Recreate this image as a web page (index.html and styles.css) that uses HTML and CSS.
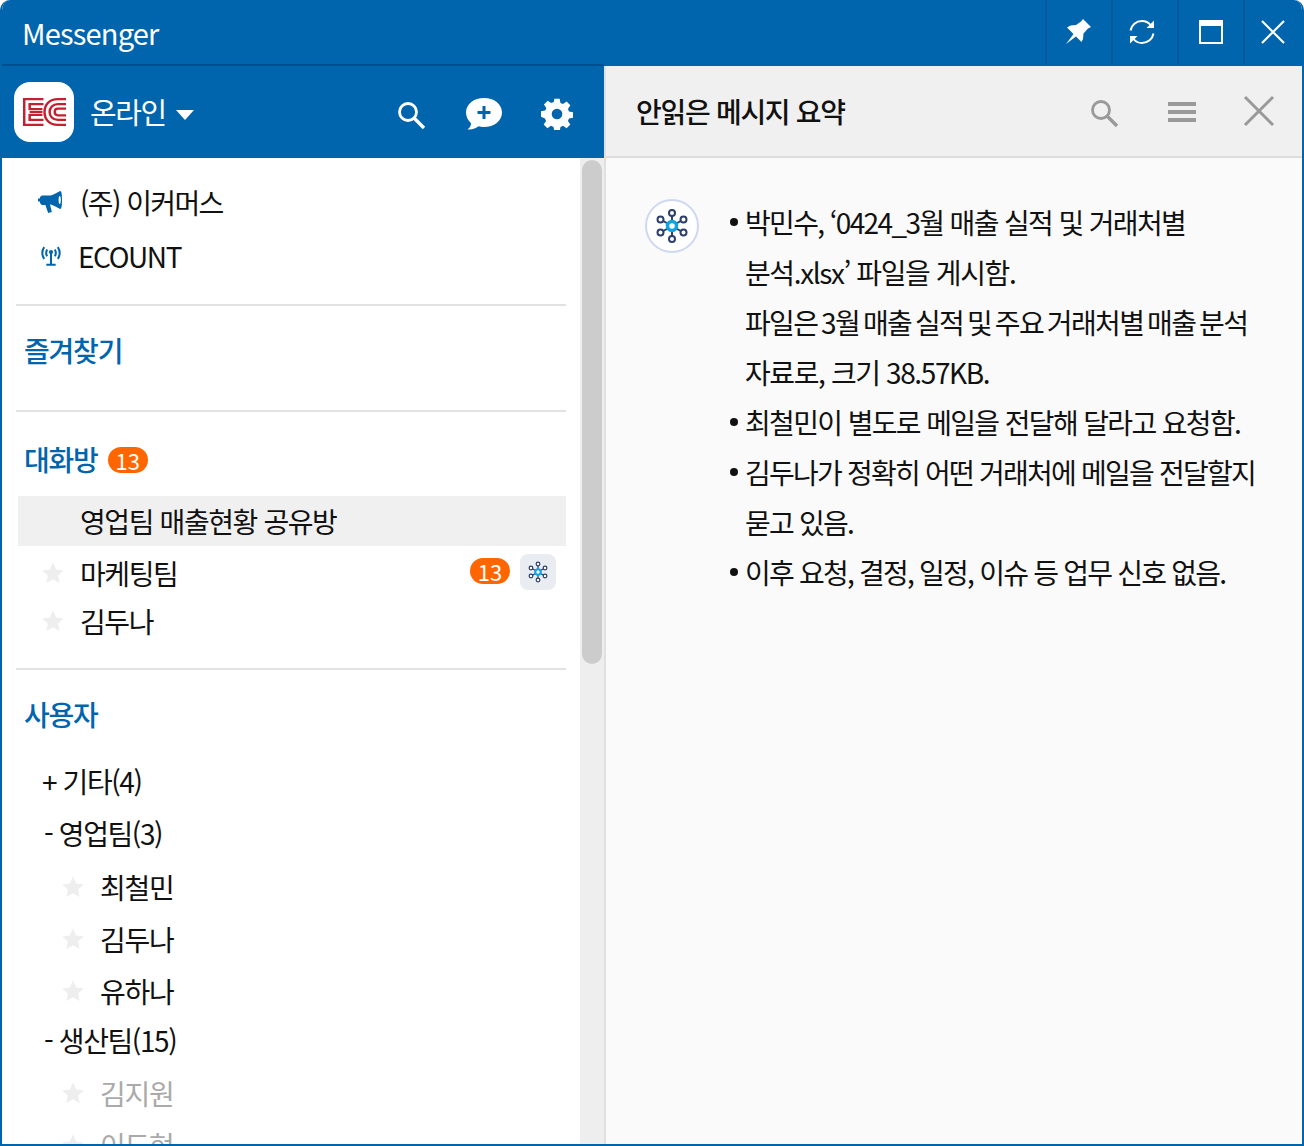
FILE: index.html
```html
<!DOCTYPE html>
<html lang="ko">
<head>
    <meta charset="UTF-8">
    <title>Messenger</title>
    <link rel="stylesheet" href="styles.css">
</head>
<body>
    <svg class="defs" width="0" height="0">
        <symbol id="star" viewBox="0 0 24 24"><path d="M12 1.500l3.200 7.100 7.600.8-5.700 5.100 1.600 7.600L12 18.300l-6.700 3.800 1.600-7.600L1.200 9.400l7.600-.8z"/></symbol>
        <symbol id="nodes" viewBox="0 0 36 36">
            <g stroke="#2b3f6b" fill="none" stroke-width="2">
                <path d="M18 18V6M18 18V30M18 18L7.500 12M18 18L28.500 12M18 18L7.500 24M18 18L28.500 24"/>
                <g fill="#fff">
                    <circle cx="18" cy="5" r="3"/><circle cx="18" cy="31" r="3"/>
                    <circle cx="6.500" cy="11.500" r="3"/><circle cx="29.500" cy="11.500" r="3"/>
                    <circle cx="6.500" cy="24.500" r="3"/><circle cx="29.500" cy="24.500" r="3"/>
                </g>
            </g>
            <circle cx="18" cy="18" r="4.500" fill="#fff" stroke="#0ea5e0" stroke-width="3.500"/>
        </symbol>
    </svg>

    <div class="window">
        <div class="titlebar">
            <div class="app-title">Messenger</div>
            <div class="win-btns">
                <div class="win-btn">
                    <svg width="26" height="26" viewBox="0 0 26 26"><path fill="#fff" d="M17 0l8 8-3 1.500-4.500 5L17 20l-1.500 3-5.500-5.500L0 25l7.500-10L1 8.500l3.500-2L10 6l5-3.500z"/></svg>
                </div>
                <div class="win-btn win-btn-refresh">
                    <svg width="28" height="28" viewBox="0 0 28 28" fill="none" stroke="#fff" stroke-width="2"><path d="M2.500 12.500C3.500 7 8 3 14 3c3.500 0 6.500 1.500 8.500 4"/><path d="M25.500 15.500c-1 5.500-5.500 9.500-11.500 9.500-3.500 0-6.500-1.500-8.500-4"/><path fill="#fff" stroke="none" d="M26 2.500V10h-7.500zM2 25.500V18h7.500z"/></svg>
                </div>
                <div class="win-btn">
                    <svg width="24" height="24" viewBox="0 0 24 24"><rect x="1" y="1" width="22" height="22" fill="none" stroke="#fff" stroke-width="2"/><rect x="0" y="0" width="24" height="6" fill="#fff"/></svg>
                </div>
                <div class="win-btn win-btn-close">
                    <svg width="26" height="26" viewBox="0 0 26 26" stroke="#fff" stroke-width="2.200"><path d="M2 2l22 22M24 2L2 24"/></svg>
                </div>
            </div>
        </div>

        <div class="main">
            <div class="left">
                <div class="left-head">
                    <div class="logo">
                        <svg width="43" height="28" viewBox="0 0 42 30" preserveAspectRatio="none" fill="none" stroke="#c4202f" stroke-width="2.400">
                            <path d="M20 1.200H1.200v27.600H20M20 6.500H6.500v5.500H19M19 18H6.500v5.500H20M6.500 15H19"/>
                            <path d="M42 1.200H34C26 1.200 21 7 21 15s5 13.800 13 13.800h8M42 6.500h-8c-5 0-8 4-8 8.500s3 8.500 8 8.500h8M42 11.500h-8c-2 0-3 1.500-3 3.500s1 3.500 3 3.500h8"/>
                        </svg>
                    </div>
                    <div class="status">온라인</div>
                    <div class="caret"></div>
                    <div class="head-icons">
                        <svg class="head-search" width="30" height="30" viewBox="0 0 30 30" fill="none" stroke="#fff"><circle cx="12" cy="12" r="8.500" stroke-width="2.800"/><path d="M18 18l10 10" stroke-width="3.400"/></svg>
                        <svg width="38" height="34" viewBox="0 0 38 34"><path fill="#fff" d="M19 1c10 0 18 6 18 14.500S29 30 19 30c-2 0-4-.2-5.500-.7C11 31.500 7 33 2.500 32.500c2-1.500 3.300-3.500 3.700-6C3 23.500 1 19.800 1 15.500 1 7 9 1 19 1z"/><path stroke="#0065ad" stroke-width="3" d="M19 9v13M12.500 15.500h13"/></svg>
                        <svg width="32" height="32" viewBox="0 0 24 24"><path fill="#fff" fill-rule="evenodd" d="M10 .5h4l.6 3.200 1.900.8 2.700-1.800 2.800 2.800-1.800 2.700.8 1.900 3.200.6v4l-3.200.6-.8 1.900 1.800 2.700-2.800 2.800-2.700-1.800-1.900.8-.6 3.200h-4l-.6-3.200-1.900-.8-2.700 1.800-2.800-2.800 1.800-2.700-.8-1.900L0 14v-4l3.200-.6.8-1.900L2.200 4.800 5 2l2.700 1.800 1.900-.8zM12 8a4 4 0 1 0 0 8 4 4 0 0 0 0-8z"/></svg>
                    </div>
                </div>
                <div class="left-body">
                    <div class="list">
                        <div class="notice-group">
                            <div class="notice notice-first">
                                <svg class="notice-icon" width="24" height="22" viewBox="0 0 26 22" preserveAspectRatio="none"><path fill="#0065ad" d="M24 0c1.500 0 2 3 2 9s-.5 9-2 9c-1 0-6-4-11-4.500L15 21l-4 1-3-8H5C3 14 2 12 2 10.500H0v-3h2C2 6 3 4.500 5 4.500h8C18 4 23 0 24 0z"/><ellipse cx="23.500" cy="9" rx="1.200" ry="4" fill="#fff"/></svg>
                                <span>(주) 이커머스</span>
                            </div>
                            <div class="notice notice-ecount">
                                <svg class="notice-icon" width="22" height="23" viewBox="0 0 26 24" fill="none" stroke="#0065ad" stroke-width="2.400"><path d="M5 2C2 6 2 12 5 16M21 2c3 4 3 10 0 14M8.500 5c-1.500 2.500-1.500 5.500 0 8M17.500 5c1.500 2.500 1.500 5.500 0 8"/><circle cx="13" cy="8" r="2.500" fill="#0065ad" stroke="none"/><path d="M13 9v13M7.500 23h11" stroke-width="2.400"/></svg>
                                <span>ECOUNT</span>
                            </div>
                        </div>

                        <div class="section section-fav">
                            <h3>즐겨찾기</h3>
                        </div>

                        <div class="section section-rooms">
                            <h3>대화방 <span class="badge">13</span></h3>
                            <div class="room room-active"><span class="room-name">영업팀 매출현황 공유방</span></div>
                            <div class="room">
                                <svg class="star"><use href="#star"/></svg>
                                <span class="room-name">마케팅팀</span>
                                <span class="badge badge-right">13</span>
                                <span class="ai-btn"><svg width="22" height="22"><use href="#nodes"/></svg></span>
                            </div>
                            <div class="room room-last">
                                <svg class="star"><use href="#star"/></svg>
                                <span class="room-name">김두나</span>
                            </div>
                        </div>

                        <div class="section section-users">
                            <h3>사용자</h3>
                            <div class="dept dept-first">+ 기타(4)</div>
                            <div class="dept">- 영업팀(3)</div>
                            <div class="user user-first"><svg class="star"><use href="#star"/></svg>최철민</div>
                            <div class="user"><svg class="star"><use href="#star"/></svg>김두나</div>
                            <div class="user"><svg class="star"><use href="#star"/></svg>유하나</div>
                            <div class="dept dept-tight">- 생산팀(15)</div>
                            <div class="user user-off user-first-off"><svg class="star"><use href="#star"/></svg>김지원</div>
                            <div class="user user-off"><svg class="star"><use href="#star"/></svg>이도현</div>
                        </div>
                    </div>
                    <div class="scrollbar"><div class="thumb"></div></div>
                </div>
            </div>

            <div class="right">
                <div class="right-head">
                    <div class="right-title">안읽은 메시지 요약</div>
                    <div class="right-icons">
                        <svg class="right-search" width="30" height="30" viewBox="0 0 30 30" fill="none" stroke="#999"><circle cx="12" cy="12" r="8.500" stroke-width="2.800"/><path d="M18 18l10 10" stroke-width="3.400"/></svg>
                        <svg class="right-menu" width="28" height="20" viewBox="0 0 28 20" fill="#999"><rect y="0" width="28" height="4"/><rect y="8" width="28" height="4"/><rect y="16" width="28" height="4"/></svg>
                        <svg width="32" height="32" viewBox="0 0 32 32" stroke="#999" stroke-width="3"><path d="M2 2l28 28M30 2L2 30"/></svg>
                    </div>
                </div>
                <div class="summary">
                    <div class="ai-avatar"><svg width="36" height="36"><use href="#nodes"/></svg></div>
                    <ul class="summary-list">
                        <li>박민수, ‘0424_3월 매출 실적 및 거래처별<br><span class="loose">분석.xlsx’ 파일을 게시함.</span><br><span class="tight">파일은 3월 매출 실적 및 주요 거래처별 매출 분석</span><br><span class="loose">자료로, 크기 38.57KB.</span></li>
                        <li>최철민이 별도로 메일을 전달해 달라고 요청함.</li>
                        <li class="li-narrow">김두나가 정확히 어떤 거래처에 메일을 전달할지<br>묻고 있음.</li>
                        <li class="li-narrow">이후 요청, 결정, 일정, 이슈 등 업무 신호 없음.</li>
                    </ul>
                </div>
            </div>
        </div>
    </div>
</body>
</html>
```

FILE: styles.css
```css
* {
    box-sizing: border-box;
}

html, body {
    margin: 0;
    height: 100%;
    background-color: #fff;
}

body {
    font-family: "Noto Sans CJK KR", "Noto Sans", sans-serif;
    font-size: 28px;
    color: #111;
    overflow: hidden;
}

.defs {
    display: block;
    height: 0;
}

.window {
    width: 1304px;
    height: 1146px;
    border: 2px solid #0065ad;
    border-top: 0;
    border-radius: 10px 10px 0 0;
    display: flex;
    flex-direction: column;
    overflow: hidden;
}

.titlebar {
    height: 66px;
    background-color: #0065ad;
    display: flex;
    justify-content: space-between;
    flex: none;
    margin: 0 -2px;
    padding-left: 22px;
}

.app-title {
    color: #fff;
    line-height: 64px;
    font-size: 29px;
    letter-spacing: -0.8px;
}

.win-btns {
    display: flex;
}

.win-btn {
    width: 66px;
    height: 64px;
    display: flex;
    align-items: center;
    justify-content: center;
    border-left: 2px solid #00589c;
}

.win-btn-refresh {
    padding-right: 6px;
}

.win-btn-close {
    width: 61px;
    padding-right: 3px;
}

.main {
    flex: 1;
    display: flex;
    min-height: 0;
}

.left {
    width: 602px;
    display: flex;
    flex-direction: column;
    flex: none;
}

.left-head {
    height: 94px;
    margin-top: -2px;
    border-top: 2px solid #00508f;
    background-color: #0065ad;
    display: flex;
    align-items: center;
    padding-left: 12px;
    flex: none;
}

.logo {
    width: 60px;
    height: 60px;
    background-color: #fff;
    border-radius: 16px;
    display: flex;
    align-items: center;
    justify-content: center;
}

.status {
    color: #fff;
    margin: 0 0 3px 16px;
    font-size: 29px;
    letter-spacing: -1.4px;
}

.caret {
    width: 0;
    height: 0;
    margin-left: 10px;
    margin-top: 5px;
    border-left: 9px solid transparent;
    border-right: 9px solid transparent;
    border-top: 10px solid #fff;
}

.head-icons {
    margin-left: auto;
    display: flex;
    align-items: center;
    gap: 38px;
    padding: 4px 31px 0 0;
}

.head-search {
    margin: 2px 1px 0 -1px;
}

.left-body {
    flex: 1;
    display: flex;
    min-height: 0;
}

.list {
    flex: 1;
    overflow: hidden;
    padding: 0 14px;
}

.notice-group {
    padding: 18px 0 21px 22px;
}

.notice {
    display: flex;
    align-items: center;
    height: 55px;
    gap: 18px;
    letter-spacing: -1.6px;
}

.notice-first {
    height: 52px;
}

.notice-ecount {
    gap: 16px;
    padding-left: 2px;
    letter-spacing: -1.4px;
}

.section {
    border-top: 2px solid #e2e2e2;
}

.section h3 {
    margin: 0;
    font-weight: 500;
    font-size: 28px;
    line-height: 42px;
    color: #0065ad;
    padding-left: 8px;
    letter-spacing: -1.2px;
    display: flex;
    align-items: center;
    gap: 10px;
}

.section h3 .badge {
    margin-top: 2px;
}

.section-fav {
    height: 106px;
    padding-top: 23px;
}

.section-rooms {
    padding-top: 26px;
}

.section-rooms h3 {
    margin-bottom: 16px;
}

.badge {
    background-color: #ff6600;
    color: #fff;
    font-size: 22px;
    font-weight: 400;
    width: 40px;
    height: 26px;
    line-height: 26px;
    border-radius: 13px;
    text-align: center;
    letter-spacing: 0;
    display: inline-block;
}

.room {
    height: 50px;
    display: flex;
    align-items: center;
    padding-left: 23px;
    margin-left: 2px;
    letter-spacing: -1.4px;
}

.room-active {
    background-color: #f0f0f0;
}

.room + .room {
    margin-top: 2px;
}

.room-active .room-name {
    margin-left: 39px;
}

.room + .room-last {
    margin-top: -2px;
    margin-bottom: 22px;
}

.star {
    width: 24px;
    height: 24px;
    fill: #eee;
    margin-right: 15px;
    flex: none;
}

.badge-right {
    margin-left: auto;
    margin-bottom: 4px;
}

.ai-btn {
    width: 36px;
    height: 36px;
    background-color: #e9ecf0;
    border-radius: 8px;
    margin: 0 10px 2px;
    display: flex;
    align-items: center;
    justify-content: center;
}

.section-users {
    padding-top: 23px;
}

.section-users h3 {
    margin-bottom: 20px;
}

.dept {
    height: 52px;
    line-height: 52px;
    padding-left: 28px;
    letter-spacing: -1.4px;
}

.dept-first {
    padding-left: 26px;
}

.dept-tight {
    margin-top: -3px;
}

.user {
    height: 52px;
    display: flex;
    align-items: center;
    padding-left: 45px;
    letter-spacing: -1.3px;
}

.user-first {
    margin-top: 2px;
}

.user-first-off {
    margin-top: 1px;
}

.user-off {
    color: #aaa;
}

.scrollbar {
    width: 24px;
    background-color: #eee;
    padding: 2px;
    flex: none;
}

.thumb {
    height: 504px;
    background-color: #ccc;
    border-radius: 10px;
}

.right {
    flex: 1;
    min-width: 0;
    border-left: 2px solid #e0e0e0;
    display: flex;
    flex-direction: column;
    background-color: #fafafa;
}

.right-head {
    height: 92px;
    background-color: #f0f0f0;
    border-bottom: 2px solid #ddd;
    display: flex;
    align-items: center;
    padding-left: 30px;
    flex: none;
}

.right-title {
    font-weight: 500;
    font-size: 28px;
    letter-spacing: -1.3px;
}

.right-icons {
    margin-left: auto;
    display: flex;
    align-items: center;
    gap: 48px;
    padding-right: 27px;
}

.right-search {
    margin-top: 4px;
}

.right-menu {
    margin: 2px -1px 0 1px;
}

.summary {
    flex: 1;
    display: flex;
    padding: 41px 38px 0 39px;
}

.ai-avatar {
    width: 54px;
    height: 54px;
    border: 2px solid #cdd8f2;
    border-radius: 50%;
    background-color: #fff;
    display: flex;
    align-items: center;
    justify-content: center;
    flex: none;
}

.summary-list {
    list-style: none;
    margin: -2px 0 0;
    padding: 0 0 0 46px;
    line-height: 50px;
    letter-spacing: -1.65px;
    white-space: nowrap;
}

.summary-list li {
    position: relative;
}

.summary-list li::before {
    content: "";
    position: absolute;
    left: -15px;
    top: 21px;
    width: 8px;
    height: 8px;
    border-radius: 50%;
    background-color: #111;
}

.li-narrow {
    letter-spacing: -1.78px;
}

.loose {
    letter-spacing: -1.4px;
}

.tight {
    word-spacing: -2.4px;
}
```
